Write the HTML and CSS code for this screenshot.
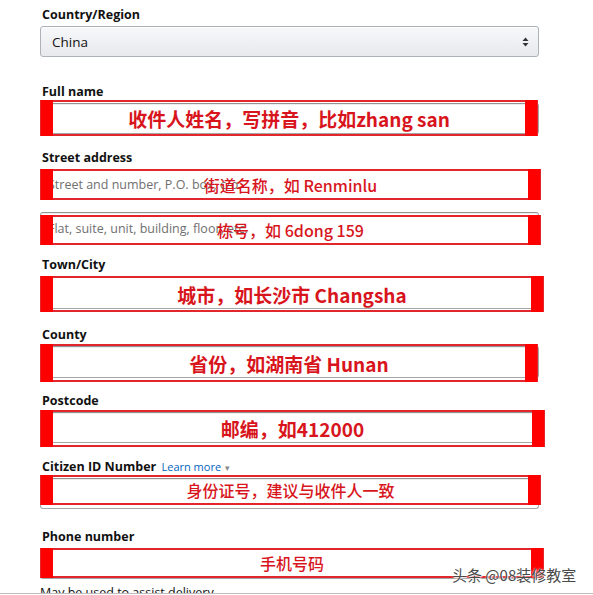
FILE: index.html
```html
<!DOCTYPE html>
<html lang="en">
<head>
  <meta charset="UTF-8" />
  <meta name="viewport" content="width=device-width, initial-scale=1" />
  <title>Shipping address</title>
  <link rel="stylesheet" href="styles.css">
</head>
<body>

  <div class="page">
    <form class="form">

      <div class="field field-country">
        <div class="label">Country/Region</div>
        <div class="select">
          <span>China</span>
          <svg class="arrows" width="7" height="10" viewBox="0 0 7 10">
            <polygon points="3.5,0.5 6.5,4 0.5,4" />
            <polygon points="0.5,6 6.5,6 3.5,9.5" />
          </svg>
        </div>
      </div>

      <div class="field">
        <div class="label">Full name</div>
        <div class="box">
          <div class="input"></div>
          <div class="mark mark-lg mark-name">收件人姓名，写拼音，比如zhang san</div>
        </div>
      </div>

      <div class="field field-street">
        <div class="label">Street address</div>
        <div class="box">
          <div class="input"><span class="placeholder">Street and number, P.O. box, c/o.</span></div>
          <div class="mark mark-street">街道名称，如 Renminlu</div>
        </div>
        <div class="box box-flat">
          <div class="input"><span class="placeholder">Flat, suite, unit, building, floor, etc.</span></div>
          <div class="mark mark-flat">栋号，如 6dong 159</div>
        </div>
      </div>

      <div class="field field-city">
        <div class="label">Town/City</div>
        <div class="box box-tall">
          <div class="input"></div>
          <div class="mark mark-lg mark-city">城市，如长沙市 Changsha</div>
        </div>
      </div>

      <div class="field field-county">
        <div class="label">County</div>
        <div class="box box-mid">
          <div class="input"></div>
          <div class="mark mark-lg mark-county">省份，如湖南省 Hunan</div>
        </div>
      </div>

      <div class="field">
        <div class="label">Postcode</div>
        <div class="box">
          <div class="input"></div>
          <div class="mark mark-lg mark-post">邮编，如412000</div>
        </div>
      </div>

      <div class="field field-id">
        <div class="label">Citizen ID Number <a class="learn" href="#">Learn more</a><span class="caret">&#9662;</span></div>
        <div class="box">
          <div class="input"></div>
          <div class="mark mark-id">身份证号，建议与收件人一致</div>
        </div>
      </div>

      <div class="field field-phone">
        <div class="label">Phone number</div>
        <div class="box">
          <div class="input"></div>
          <div class="mark mark-phone">手机号码</div>
        </div>
        <div class="hint">May be used to assist delivery</div>
      </div>

    </form>

    <div class="watermark">头条 @08装修教室</div>
  </div>

</body>
</html>
```

FILE: styles.css
```css
body {
  margin: 0;
  background: #fff;
  font-family: "Open Sans", "Liberation Sans", sans-serif;
  color: #111;
}

.page {
  position: relative;
  height: 593px;
  overflow: hidden;
  border-bottom: 1px solid #bdbdbd;
}

.form {
  width: 499px;
  padding: 6px 0 0 40px;
}

.field {
  margin-bottom: 15px;
}

.field-country { margin-bottom: 26px; }
.field-street { margin-bottom: 11px; }
.field-city { margin-bottom: 17px; }
.field-county { margin-bottom: 14px; }
.field-id { margin-bottom: 19px; }

.label {
  height: 18px;
  line-height: 18px;
  margin: 0 0 2px 2px;
  font-size: 12.5px;
  font-weight: 700;
  white-space: nowrap;
}

.learn {
  margin-left: 2px;
  font-size: 11px;
  font-weight: 400;
  color: #0066c0;
  text-decoration: none;
}

.caret {
  margin-left: 4px;
  font-size: 9px;
  font-weight: 400;
  color: #888;
}

.select {
  box-sizing: border-box;
  height: 31px;
  display: flex;
  align-items: center;
  justify-content: space-between;
  padding: 0 9px 0 11px;
  font-size: 13.5px;
  background: linear-gradient(#f7f8fa, #e7e9ec);
  border: 1px solid #adb1b8;
  border-radius: 3px;
  box-shadow: inset 0 1px 0 rgba(255,255,255,0.6);
}

.arrows polygon {
  fill: #333;
}

.box {
  position: relative;
  height: 31px;
}

.box-flat {
  height: 33px;
  margin-top: 12px;
}

.box-tall { height: 33px; }
.box-mid { height: 32px; }

.input {
  box-sizing: border-box;
  height: 100%;
  display: flex;
  align-items: center;
  padding-left: 7px;
  background: #fff;
  border: 1px solid #a6a6a6;
  border-top-color: #949494;
  border-radius: 3px;
  box-shadow: inset 0 1px 0 rgba(0,0,0,0.07);
}

.placeholder {
  font-size: 12.5px;
  color: #6f6f6f;
  white-space: nowrap;
}

/* red annotation boxes drawn over the inputs */
.mark {
  position: absolute;
  left: 0;
  right: 0;
  top: 0;
  bottom: 0;
  display: flex;
  align-items: center;
  justify-content: center;
  border: 2px solid #e2262c;
  font-family: "Noto Sans CJK SC", sans-serif;
  font-size: 16px;
  font-weight: 500;
  color: #d8151c;
  white-space: nowrap;
}

.mark::before,
.mark::after {
  content: "";
  position: absolute;
  top: -2px;
  bottom: -2px;
  width: 12px;
  background: #f00;
}

.mark::before { left: -1px; }
.mark::after { right: -1px; }

.mark-lg {
  font-size: 19px;
  font-weight: 700;
}

.mark-name { top: -3px; bottom: -2px; right: 1px; }
.mark-street { right: -2px; }
.mark-flat { top: 3px; right: -2px; }
.mark-city { bottom: -3px; right: -5px; }
.mark-county { top: -2px; bottom: -4px; right: 1px; }
.mark-post { top: -2px; bottom: -4px; right: -6px; }
.mark-id { top: -3px; bottom: 4px; right: -2px; }
.mark-phone { bottom: 1px; right: -5px; }

.hint {
  margin-top: 5px;
  font-size: 12.5px;
  line-height: 18px;
}

.watermark {
  position: absolute;
  top: 564px;
  left: 452px;
  font-family: "Noto Sans CJK SC", sans-serif;
  font-size: 15px;
  color: #4a4a4a;
  text-shadow: 0 0 2px #fff, 1px 1px 1px #fff;
  white-space: nowrap;
}
```
